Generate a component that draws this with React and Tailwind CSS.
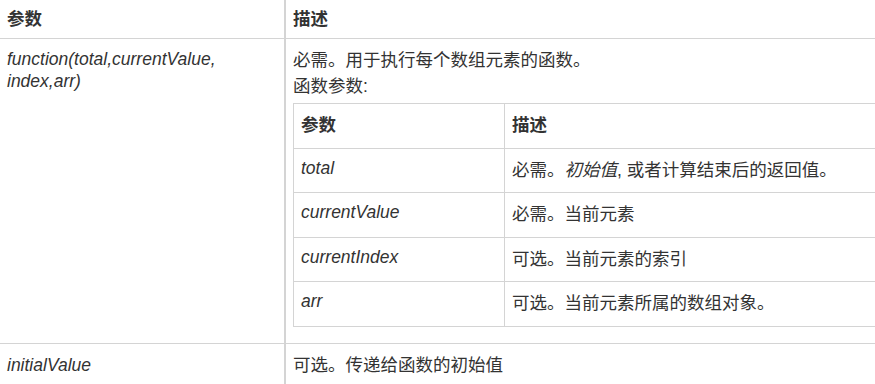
const rows = [
  { name: "total", desc: (<>必需。<em>初始值</em>, 或者计算结束后的返回值。</>) },
  { name: "currentValue", desc: "必需。当前元素" },
  { name: "currentIndex", desc: "可选。当前元素的索引" },
  { name: "arr", desc: "可选。当前元素所属的数组对象。" },
];

export default function App() {
  return (
    <div className="w-[875px] h-[384px] overflow-hidden bg-white text-[#333] text-[17.5px] font-['Liberation_Sans','Noto_Sans_CJK_SC',sans-serif]">
      <table className="table-fixed w-[1100px] border-separate border-spacing-0 text-left">
        <colgroup>
          <col className="w-[286px]" />
          <col />
        </colgroup>
        <thead>
          <tr>
            <th className="border-b border-r-2 border-[#d4d4d4] px-[7px] py-[6px] leading-[26px] font-bold align-top">
              参数
            </th>
            <th className="border-b border-[#d4d4d4] px-[7px] py-[6px] leading-[26px] font-bold align-top">
              描述
            </th>
          </tr>
        </thead>
        <tbody>
          <tr>
            <td className="border-b border-r-2 border-[#d4d4d4] px-[7px] pt-[9px] leading-[22px] align-top">
              <i>function(total,currentValue, index,arr)</i>
            </td>
            <td className="border-b border-[#d4d4d4] px-[7px] py-[8px] leading-[26px] align-top">
              必需。用于执行每个数组元素的函数。
              <br />
              函数参数:
              {/* nested parameter table */}
              <table className="table-fixed w-[700px] mt-[4px] mb-[8px] border-separate border-spacing-0 border-t border-l border-[#d4d4d4] text-left">
                <colgroup>
                  <col className="w-[211px]" />
                  <col />
                </colgroup>
                <thead>
                  <tr>
                    <th className="border-b border-r border-[#d4d4d4] px-[7px] py-[9px] leading-[25.5px] font-bold align-top">
                      参数
                    </th>
                    <th className="border-b border-r border-[#d4d4d4] px-[7px] py-[9px] leading-[25.5px] font-bold align-top">
                      描述
                    </th>
                  </tr>
                </thead>
                <tbody>
                  {rows.map((r) => (
                    <tr key={r.name}>
                      <td className="border-b border-r border-[#d4d4d4] px-[7px] pt-[7px] pb-[11px] leading-[25.5px] align-top">
                        <i>{r.name}</i>
                      </td>
                      <td className="border-b border-r border-[#d4d4d4] px-[7px] py-[9px] leading-[25.5px] align-top">
                        {r.desc}
                      </td>
                    </tr>
                  ))}
                </tbody>
              </table>
            </td>
          </tr>
          <tr>
            <td className="border-b border-r-2 border-[#d4d4d4] px-[7px] py-[8px] leading-[26px] align-top">
              <i>initialValue</i>
            </td>
            <td className="border-b border-[#d4d4d4] px-[7px] py-[8px] leading-[26px] align-top">
              可选。传递给函数的初始值
            </td>
          </tr>
        </tbody>
      </table>
    </div>
  );
}
